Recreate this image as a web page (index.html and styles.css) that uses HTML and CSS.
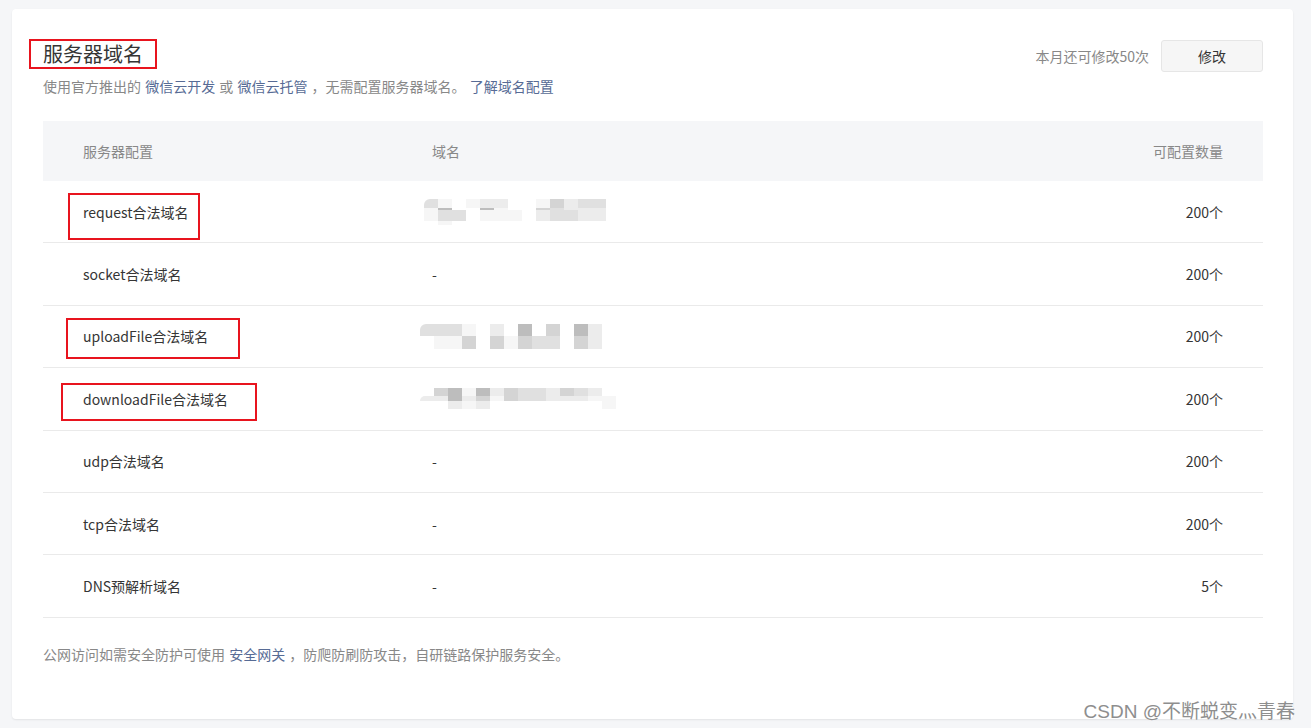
FILE: index.html
```html
<!DOCTYPE html>
<html lang="zh-CN">
<head>
<meta charset="utf-8">
<title>服务器域名</title>
<link rel="stylesheet" href="styles.css">
</head>
<body>
<div class="page">
  <section class="card">
    <div class="head">
      <div class="head-left">
        <h2 class="title">服务器域名<span class="mark mark-title"></span></h2>
        <p class="desc">使用官方推出的 <a class="link">微信云开发</a> 或 <a class="link">微信云托管</a> ，无需配置服务器域名。 <a class="link">了解域名配置</a></p>
      </div>
      <div class="head-right">
        <span class="quota">本月还可修改50次</span>
        <button class="btn">修改</button>
      </div>
    </div>

    <div class="table">
      <div class="tr th">
        <div class="c1">服务器配置</div>
        <div class="c2">域名</div>
        <div class="c3">可配置数量</div>
      </div>
      <div class="tr">
        <span class="mark mark-r1"></span>
        <div class="c1">request合法域名</div>
        <div class="c2">
          <div class="mosaic m1">
            <div class="mrow h9"><i class="s3 rl"></i><i class="s1"></i><i class="s0"></i><i class="s1"></i><i class="s2"></i><i class="s2"></i><i class="s0"></i><i class="s0"></i><i class="s1"></i><i class="s4"></i><i class="s2"></i><i class="s3"></i><i class="s3"></i></div>
            <div class="mrow h2"><i class="s1"></i><i class="s5"></i><i class="s0"></i><i class="s0"></i><i class="s5"></i><i class="s1"></i><i class="s0"></i><i class="s0"></i><i class="s4"></i><i class="s3"></i><i class="s2"></i><i class="s2"></i><i class="s2"></i></div>
            <div class="mrow h11"><i class="s1"></i><i class="s3"></i><i class="s3"></i><i class="s0"></i><i class="s1"></i><i class="s1"></i><i class="s1"></i><i class="s0"></i><i class="s2"></i><i class="s3"></i><i class="s3"></i><i class="s2"></i><i class="s2"></i></div>
            <div class="mrow h4"><i class="s0"></i><i class="s1"></i><i class="s0"></i></div>
          </div>
        </div>
        <div class="c3">200个</div>
      </div>
      <div class="tr">
        <div class="c1">socket合法域名</div>
        <div class="c2">-</div>
        <div class="c3">200个</div>
      </div>
      <div class="tr">
        <span class="mark mark-r3"></span>
        <div class="c1">uploadFile合法域名</div>
        <div class="c2">
          <div class="mosaic m3">
            <div class="mrow h12"><i class="s3 rl"></i><i class="s3"></i><i class="s3"></i><i class="s1"></i><i class="s0"></i><i class="s2"></i><i class="s0"></i><i class="s5"></i><i class="s0"></i><i class="s4"></i><i class="s0"></i><i class="s5"></i><i class="s2"></i></div>
            <div class="mrow h13"><i class="s0"></i><i class="s1"></i><i class="s1"></i><i class="s4"></i><i class="s0"></i><i class="s4"></i><i class="s1"></i><i class="s4"></i><i class="s3"></i><i class="s3"></i><i class="s0"></i><i class="s4"></i><i class="s2"></i></div>
          </div>
        </div>
        <div class="c3">200个</div>
      </div>
      <div class="tr">
        <span class="mark mark-r4"></span>
        <div class="c1">downloadFile合法域名</div>
        <div class="c2">
          <div class="mosaic m4">
            <div class="mrow h8"><i class="s0"></i><i class="s4"></i><i class="s5"></i><i class="s1"></i><i class="s5"></i><i class="s2"></i><i class="s4"></i><i class="s3"></i><i class="s3"></i><i class="s2"></i><i class="s4"></i><i class="s3"></i><i class="s2"></i></div>
            <div class="mrow h5"><i class="s2 rl"></i><i class="s2"></i><i class="s5"></i><i class="s2"></i><i class="s4"></i><i class="s1"></i><i class="s4"></i><i class="s3"></i><i class="s3"></i><i class="s2"></i><i class="s2"></i><i class="s2"></i><i class="s1"></i><i class="s1"></i></div>
            <div class="mrow h8"><i class="s0"></i><i class="s0"></i><i class="s2"></i><i class="s1"></i><i class="s2"></i><i class="s0"></i><i class="s0"></i><i class="s0"></i><i class="s0"></i><i class="s0"></i><i class="s0"></i><i class="s0"></i><i class="s0"></i><i class="s1"></i></div>
          </div>
        </div>
        <div class="c3">200个</div>
      </div>
      <div class="tr">
        <div class="c1">udp合法域名</div>
        <div class="c2">-</div>
        <div class="c3">200个</div>
      </div>
      <div class="tr">
        <div class="c1">tcp合法域名</div>
        <div class="c2">-</div>
        <div class="c3">200个</div>
      </div>
      <div class="tr">
        <div class="c1">DNS预解析域名</div>
        <div class="c2">-</div>
        <div class="c3">5个</div>
      </div>
    </div>

    <p class="foot">公网访问如需安全防护可使用 <a class="link">安全网关</a> ，防爬防刷防攻击，自研链路保护服务安全。</p>
  </section>
  <div class="watermark">CSDN @不断蜕变灬青春</div>
</div>
</body>
</html>
```

FILE: styles.css
```css
* { box-sizing: border-box; }

html, body {
  margin: 0;
  padding: 0;
  background: #f5f6f8;
}

body {
  font-family: "Noto Sans CJK SC", "Microsoft YaHei", "Noto Sans", sans-serif;
  color: #353535;
  width: 1311px;
  height: 728px;
  overflow: hidden;
}

.page {
  position: relative;
  height: 728px;
  padding: 9px 18px 0 12px;
}

.card {
  position: relative;
  height: 710px;
  background: #ffffff;
  border-radius: 4px;
  box-shadow: 0 1px 2px rgba(0, 0, 0, 0.08);
  padding: 30px 30px 0 31px;
}

.head {
  display: flex;
  justify-content: space-between;
  align-items: flex-start;
}

.title {
  position: relative;
  margin: 0;
  font-size: 20px;
  font-weight: 400;
  line-height: 30px;
  color: #353535;
  display: inline-block;
}

.desc {
  margin: 7px 0 0;
  font-size: 14px;
  line-height: 20px;
  color: #888888;
  word-spacing: 1px;
}

.link {
  color: #576b95;
  text-decoration: none;
}

.head-right {
  display: flex;
  align-items: center;
  gap: 12px;
  margin-top: 1px;
}

.quota {
  font-size: 14px;
  color: #888888;
}

.btn {
  width: 102px;
  height: 32px;
  background: #f6f6f6;
  border: 1px solid #e6e6e6;
  border-radius: 3px;
  font-family: inherit;
  font-size: 14px;
  color: #353535;
  padding: 0;
}

.table {
  margin-top: 25px;
}

.tr {
  position: relative;
  display: flex;
  align-items: center;
  height: 62.4px;
  border-bottom: 1px solid #eaeaea;
  font-size: 14px;
  color: #353535;
}

.tr.th {
  height: 60px;
  background: #f5f6f8;
  border-bottom: none;
  color: #888888;
}

.c1 {
  width: 389px;
  padding-left: 40px;
}

.c2 {
  flex: 1;
}

.c3 {
  width: 200px;
  text-align: right;
  padding-right: 40px;
}

.mark {
  position: absolute;
  border: 2px solid #e8141e;
  pointer-events: none;
}

.mark-title { left: -14px; top: 0; width: 128px; height: 30px; }
.mark-r1 { left: 25px; top: 12px; width: 132px; height: 47px; }
.mark-r3 { left: 23px; top: 12px; width: 174px; height: 41px; }
.mark-r4 { left: 18px; top: 15px; width: 196px; height: 38px; }

.mosaic {
  display: flex;
  flex-direction: column;
}

.m1 { margin-left: -8px; }
.m3 { margin-left: -12px; }
.m4 { margin-left: -12px; }

.mrow { display: flex; }
.mrow i { display: block; width: 14px; flex: none; }
.h2 i { height: 2px; }
.h4 i { height: 4px; }
.h5 i { height: 5px; }
.h8 i { height: 8px; }
.h9 i { height: 9px; }
.h11 i { height: 11px; }
.h12 i { height: 12px; }
.h13 i { height: 13px; }

.s0 { background: transparent; }
.s1 { background: #f6f6f6; }
.s2 { background: #ececec; }
.s3 { background: #e0e0e0; }
.s4 { background: #d4d4d4; }
.s5 { background: #bdbdbd; }
.rl { border-radius: 6px 0 0 0; }

.foot {
  margin: 26px 0 0;
  font-size: 14px;
  line-height: 20px;
  color: #888888;
  word-spacing: 1px;
}

.watermark {
  position: absolute;
  right: 16px;
  bottom: 4px;
  font-size: 19px;
  line-height: 24px;
  color: #8e8e8e;
  font-family: "Liberation Sans", "Noto Sans CJK SC", sans-serif;
  text-shadow: 0 0 1px #ffffff;
}
```
